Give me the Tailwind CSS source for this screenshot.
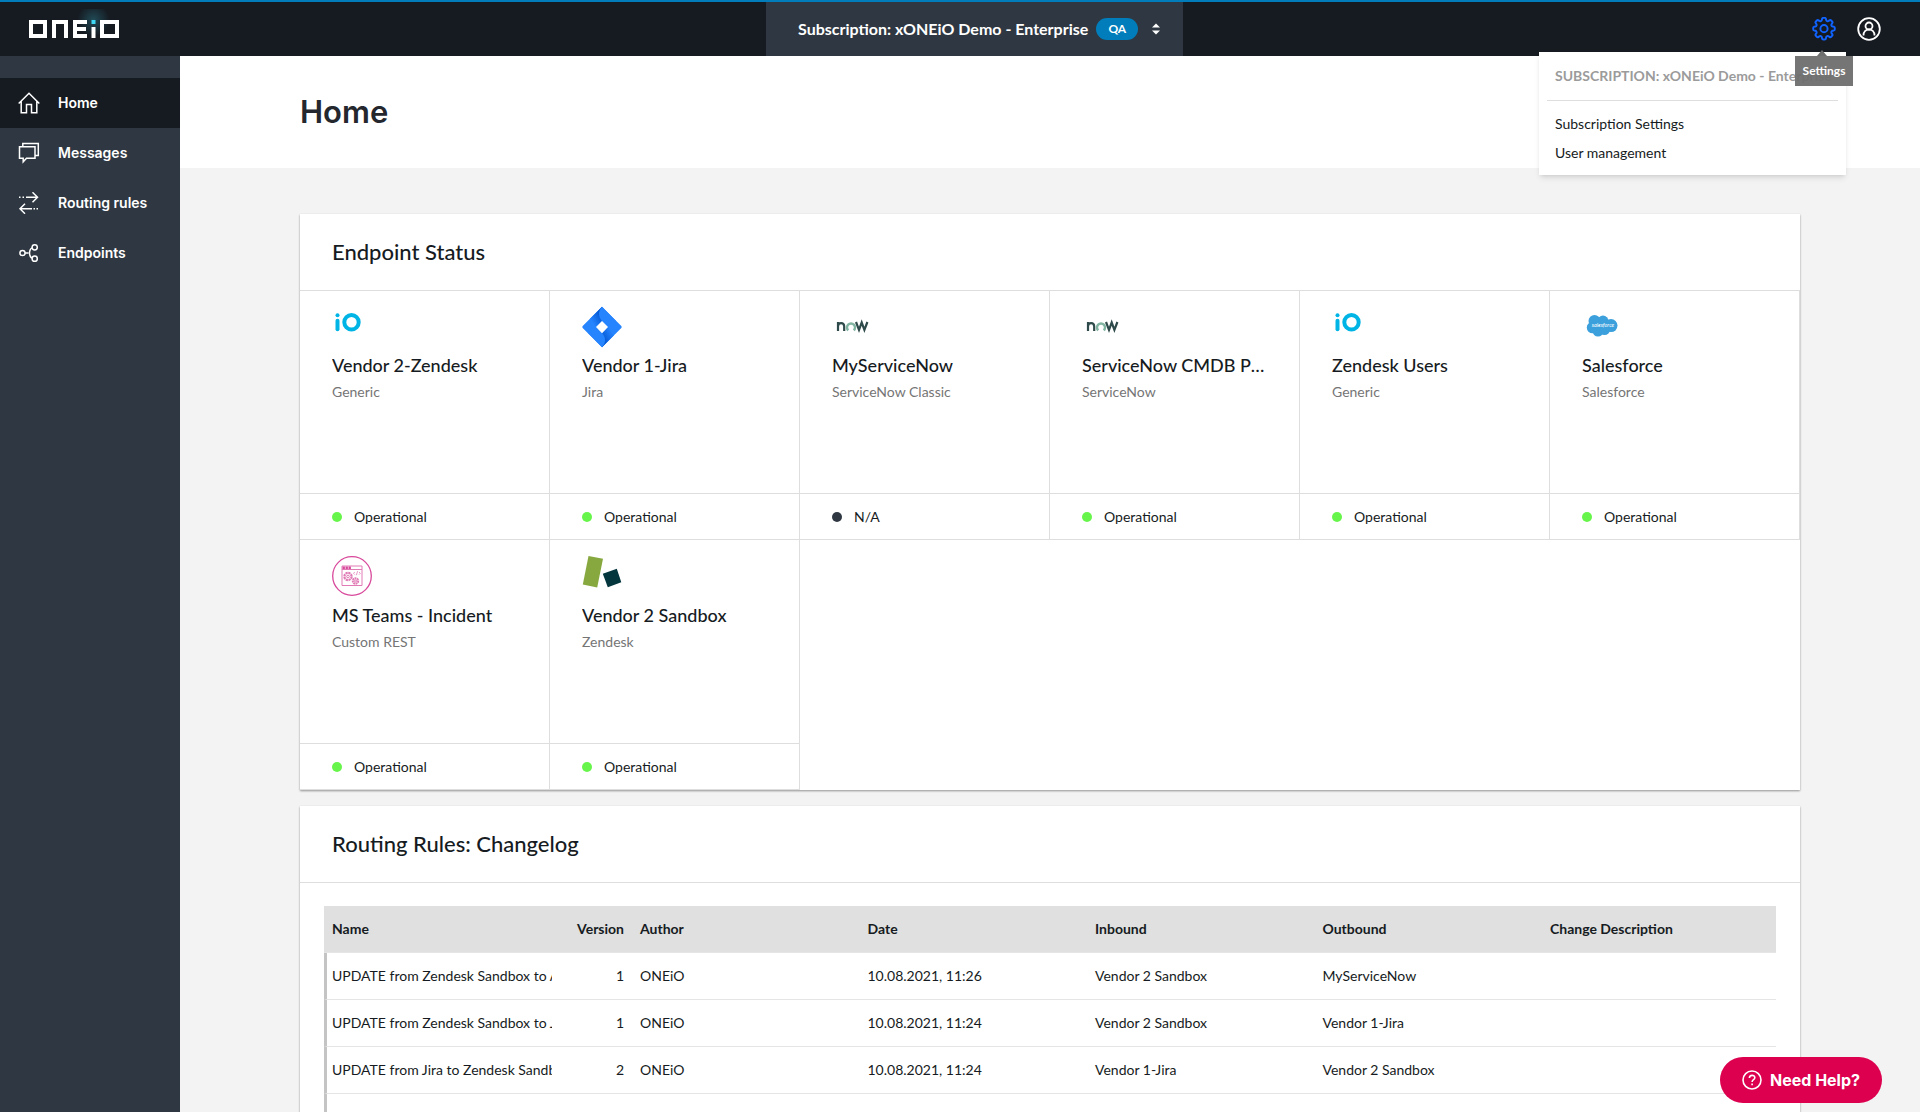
<!DOCTYPE html>
<html lang="en">
<head>
<meta charset="utf-8">
<meta name="viewport" content="width=device-width, initial-scale=1">
<title>ONEiO - Home</title>
<script src="https://cdn.jsdelivr.net/npm/@tailwindcss/browser@4"></script>
</head>
<body class="h-screen overflow-hidden flex flex-col bg-[#f3f3f3] font-['Lato',sans-serif] text-sm text-[#161b22]">

<svg class="hidden" aria-hidden="true">
  <symbol id="io" viewBox="0 0 40 40">
    <circle cx="5.500" cy="9.300" r="2" fill="#00b5e5"/>
    <path d="M5.500 14.800v8.500" stroke="#00b5e5" stroke-width="4" stroke-linecap="round"/>
    <circle cx="19.500" cy="16.200" r="7.200" fill="none" stroke="#00b5e5" stroke-width="4"/>
  </symbol>
  <symbol id="now" viewBox="0 0 40 40">
    <path d="M6 25v-9M6 20.500c0-4.600 6.200-4.600 6.200 0V25" fill="none" stroke="#2f4a4a" stroke-width="2.200"/>
    <path d="M16.200 24.300a4 4 0 1 1 5.600 0" fill="none" stroke="#81b5a1" stroke-width="2.400"/>
    <path d="M24 16l3 7.800 2.700-7.300 2.700 7.300 3-7.800" fill="none" stroke="#2f4a4a" stroke-width="2.200"/>
  </symbol>
</svg>

<header class="relative z-10 flex h-14 shrink-0 items-stretch border-t-2 border-[#007dba] bg-[#161b22] pl-7 pr-[39px] text-white">
  <a href="#" aria-label="ONEiO" class="flex flex-1 items-center">
    <svg class="h-10 w-[100px]" viewBox="0 0 100 40">
      <defs><radialGradient id="glow"><stop offset="0" stop-color="#3fd9f5" stop-opacity=".25"/><stop offset="1" stop-color="#3fd9f5" stop-opacity="0"/></radialGradient></defs>
      <circle cx="65.500" cy="11" r="16" fill="url(#glow)"/>
      <g fill="none" stroke="#fff" stroke-width="4">
        <path d="M3 13h14v14H3z"/>
        <path d="M26 29V13h12v16"/>
        <path d="M59 13H47v14h12M47 20h11"/>
        <path d="M65.500 18v11"/>
        <path d="M74 13h15v14H74z"/>
      </g>
      <path d="M63.500 11h4v4h-4z" fill="#3fd9f5"/>
    </svg>
  </a>
  <button type="button" class="ml-10 flex w-[417px] items-center bg-[#2f3842] pl-8 text-base font-bold">
    Subscription: xONEiO Demo - Enterprise
    <span class="ml-2 flex h-[22px] w-[42px] items-center justify-center rounded-full bg-[#007dba] text-xs">QA</span>
    <svg class="ml-3 h-3 w-3" viewBox="0 0 12 12" fill="#fff"><path d="M2 4.500L6 .5l4 4zM2 7.500h8l-4 4z"/></svg>
  </button>
  <div class="flex flex-1 items-center justify-end gap-[21px]">
    <div class="relative flex">
      <button type="button" aria-label="Settings" class="text-[#1063fe]">
        <svg class="size-6" viewBox="2 2 20 20" fill="none" stroke="currentColor" stroke-width="1.600" stroke-linejoin="round"><path d="M10.343 3.940c.09-.542.560-.940 1.110-.940h1.093c.550 0 1.020.398 1.110.940l.149.894c.070.424.384.764.780.930.398.164.855.142 1.205-.108l.737-.527a1.125 1.125 0 0 1 1.450.120l.773.774c.390.389.440 1.002.120 1.450l-.527.737c-.250.350-.272.806-.107 1.204.165.397.505.710.930.780l.893.150c.543.090.940.559.940 1.109v1.094c0 .550-.397 1.020-.940 1.110l-.894.149c-.424.070-.764.383-.929.780-.165.398-.143.854.107 1.204l.527.738c.320.447.269 1.060-.120 1.450l-.774.773a1.125 1.125 0 0 1-1.449.120l-.738-.527c-.350-.250-.806-.272-1.203-.107-.398.165-.710.505-.781.929l-.149.894c-.090.542-.560.940-1.110.940h-1.094c-.550 0-1.019-.398-1.110-.940l-.148-.894c-.071-.424-.384-.764-.781-.930-.398-.164-.854-.142-1.204.108l-.738.527c-.447.320-1.060.269-1.450-.120l-.773-.774a1.125 1.125 0 0 1-.120-1.450l.527-.737c.250-.350.272-.806.108-1.204-.165-.397-.506-.710-.930-.780l-.894-.150c-.542-.090-.940-.560-.940-1.109v-1.094c0-.550.398-1.020.940-1.110l.894-.149c.424-.070.765-.383.930-.780.165-.398.143-.854-.108-1.204l-.526-.738a1.125 1.125 0 0 1 .120-1.450l.773-.773a1.125 1.125 0 0 1 1.450-.120l.737.527c.350.250.807.272 1.204.107.397-.165.710-.505.780-.929l.150-.894Z" transform="translate(0 -.3)"/><circle cx="12" cy="11.700" r="3"/></svg>
      </button>
      <div class="absolute -right-2.5 top-[35px] w-[307px] bg-white px-2 pb-2 text-[#161b22] shadow-md">
        <div class="flex h-[49px] items-center overflow-hidden whitespace-nowrap border-b border-[#dedede] px-2 font-bold text-[#9b9b9b]">SUBSCRIPTION: xONEiO Demo - Enterprise</div>
        <nav class="flex flex-col pt-2">
          <a href="#" class="px-2 py-1 leading-[21px]">Subscription Settings</a>
          <a href="#" class="px-2 py-1 leading-[21px]">User management</a>
        </nav>
      </div>
      <div role="tooltip" class="absolute -right-[17px] top-[39px] flex h-[30px] w-[58px] items-center justify-center bg-[#6e6e6e]/95 text-xs font-bold">
        <span class="absolute -top-1.5 left-[22px] border-x-[5px] border-b-[6px] border-x-transparent border-b-[#6e6e6e]"></span>
        Settings
      </div>
    </div>
    <button type="button" aria-label="Account">
      <svg class="size-6" viewBox="0 0 24 24" fill="none" stroke="#fff" stroke-width="1.800"><circle cx="12" cy="12" r="10.800"/><circle cx="12" cy="9" r="3.500"/><path d="M6.500 18.500c0-8 11-8 11 0"/></svg>
    </button>
  </div>
</header>

<div class="flex min-h-0 flex-1">
  <nav class="w-[180px] shrink-0 bg-[#2f3842] pt-[22px] font-['Inter',sans-serif] font-semibold text-white">
    <a href="#" class="flex h-[50px] items-center gap-[18px] bg-[#161b22] pl-[18px]">
      <svg class="size-[22px]" viewBox="0 0 22 22" fill="none" stroke="#fff" stroke-width="1.500"><path d="M.7 11.500L11 1.200l10.300 10.300M3.200 9.500v11.300h5.300v-8.300h5v8.300h5.300V9.500"/></svg>
      Home
    </a>
    <a href="#" class="flex h-[50px] items-center gap-[18px] pl-[18px]">
      <svg class="size-[22px]" viewBox="0 0 22 22" fill="none" stroke="#fff" stroke-width="1.500"><path d="M4.800 4.500V1.500h15.500v12h-3.300"/><path d="M1.500 4.800h15.500v11.500H8.500L5.200 19.800v-3.500H1.500z"/></svg>
      Messages
    </a>
    <a href="#" class="flex h-[50px] items-center gap-[18px] pl-[18px]">
      <svg class="size-[22px]" viewBox="0 0 22 22" fill="none" stroke="#fff" stroke-width="1.500"><path d="M8 5.300h12M14.500.3l5 5-5 5M14 16.700H2M7 11.700l-5 5 5 5M1 5.300h1.500M4.500 5.300H6M15.500 16.700H17M18.500 16.700H20"/></svg>
      Routing rules
    </a>
    <a href="#" class="flex h-[50px] items-center gap-[18px] pl-[18px]">
      <svg class="size-[22px]" viewBox="0 0 22 22" fill="none" stroke="#fff" stroke-width="1.500"><circle cx="4.500" cy="11" r="2.600"/><circle cx="16.700" cy="5.300" r="2.600"/><circle cx="16.700" cy="16.700" r="2.600"/><path d="M7.100 11h3.400M14.100 5.900c-2 .7-2.400 2-2.600 5.100.2 3.100.6 4.400 2.600 5.100"/></svg>
      Endpoints
    </a>
  </nav>

  <main class="min-w-0 flex-1 overflow-hidden">
    <div class="h-28 bg-white">
      <div class="mx-auto flex h-full max-w-[1500px] items-center">
        <h1 class="font-['Inter',sans-serif] text-[31px] font-semibold text-[#24272d]">Home</h1>
      </div>
    </div>

    <div class="mx-auto flex max-w-[1500px] flex-col gap-4 pt-[46px]">
      <section class="bg-white shadow-[0_1px_2px_rgba(0,0,0,0.4)]">
        <h2 class="flex h-[77px] items-center border-b border-[#dedede] px-8 text-[22px] font-medium">Endpoint Status</h2>
        <ul id="endpoints" class="-mt-px grid grid-cols-6"></ul>
      </section>

      <section class="bg-white shadow-[0_1px_2px_rgba(0,0,0,0.4)]">
        <h2 class="flex h-[77px] items-center border-b border-[#dedede] px-8 text-[22px] font-medium">Routing Rules: Changelog</h2>
        <div class="px-6 pt-[23px]">
          <table class="w-full table-fixed border-separate border-spacing-0 text-left">
            <colgroup><col class="w-[236px]"><col class="w-[72px]"><col><col><col><col><col class="w-[234px]"></colgroup>
            <thead class="bg-[#e0e0e0]">
              <tr class="h-[47px]">
                <th class="border-b border-[#e5e5e5] px-2 font-bold">Name</th>
                <th class="border-b border-[#e5e5e5] px-2 text-right font-bold">Version</th>
                <th class="border-b border-[#e5e5e5] px-2 font-bold">Author</th>
                <th class="border-b border-[#e5e5e5] px-2 font-bold">Date</th>
                <th class="border-b border-[#e5e5e5] px-2 font-bold">Inbound</th>
                <th class="border-b border-[#e5e5e5] px-2 font-bold">Outbound</th>
                <th class="border-b border-[#e5e5e5] px-2 font-bold">Change Description</th>
              </tr>
            </thead>
            <tbody id="log"></tbody>
          </table>
        </div>
      </section>
    </div>
  </main>
</div>

<button type="button" class="fixed bottom-[9px] right-[38px] flex h-[46px] w-[162px] items-center justify-center gap-2 rounded-full bg-[#dc004e] font-['Inter',sans-serif] text-base font-bold text-white">
  <svg class="size-5" viewBox="0 0 20 20" fill="none" stroke="#fff" stroke-width="1.600"><circle cx="10" cy="10" r="9"/><path d="M7.400 8c0-3.600 5.400-3.400 5.400-.3 0 2-2.700 2-2.700 4.300M10.100 13.500v1.800"/></svg>
  Need Help?
</button>

<script>
const logos = {
  io: '<svg class="size-10" viewBox="0 0 40 40"><use href="#io"/></svg>',
  now: '<svg class="size-10" viewBox="0 0 40 40"><use href="#now"/></svg>',
  jira: '<svg class="size-10 overflow-visible" viewBox="0 0 40 40"><defs><linearGradient id="j1" x1="1" y1="0" x2="0.2" y2="0.8"><stop offset=".2" stop-color="#0052cc"/><stop offset="1" stop-color="#2684ff"/></linearGradient><linearGradient id="j2" x1="0" y1="1" x2="0.8" y2="0.2"><stop offset=".2" stop-color="#0052cc"/><stop offset="1" stop-color="#2684ff"/></linearGradient></defs><g transform="translate(0 .8)"><path d="M20 0l19.300 19.300q.9.900 0 1.800L20 40.500.7 21.100q-.9-.9 0-1.800z" fill="#2684ff"/><path d="M20 0v14.200l-5.800 6L8 12z" fill="url(#j1)"/><path d="M20 0c-4 4-4 10 0 14.200l6 6 8-6z" fill="#2684ff"/><path d="M20 40.500V26.300l5.800-6 6.200 8.200z" fill="url(#j2)"/><path d="M20 40.500c4-4 4-10 0-14.200l-6-6-8 6z" fill="#2684ff"/><path d="M20 14.200l6 6.100-6 6.100-6-6.100z" fill="#fff"/></g></svg>',
  sf: '<svg class="size-10" viewBox="0 0 40 40"><g transform="translate(0 .6)"><g fill="#3ba0dc"><circle cx="12.500" cy="14.500" r="6"/><circle cx="21" cy="14.500" r="5.500"/><circle cx="29" cy="19" r="6.500"/><circle cx="10.500" cy="21" r="5.700"/><circle cx="16" cy="24.500" r="5.500"/><circle cx="22.500" cy="23" r="5.500"/></g><text x="21" y="20.500" text-anchor="middle" font-size="5.500" font-style="italic" fill="#fff">salesforce</text></g></svg>',
  rest: '<svg class="size-10" viewBox="0 0 40 40" fill="none" stroke="#d8499b"><circle cx="20" cy="20" r="19.300" stroke-width="1.300"/><path d="M10 10h20v19.500H10zM10 13.500h20" stroke="#e07bb5"/><path d="M10.500 11.800h9" stroke="#d8499b" stroke-width="2.400" stroke-dasharray="2.400 .6"/><g stroke="#e07bb5"><circle cx="16" cy="20.500" r="3.600" stroke-width="2.200" stroke-dasharray="2.200 .6"/><circle cx="16" cy="20.500" r="1.300"/><circle cx="23.500" cy="25" r="2.700" stroke-width="2" stroke-dasharray="1.800 .5"/><circle cx="23.500" cy="25" r="1"/><path d="M22.800 16l-1.300 1.300 1.300 1.300M27 16l1.300 1.300-1.300 1.300M25.600 15.200l-1.200 4" stroke-width=".8"/></g></svg>',
  zd: '<svg class="size-10" viewBox="0 0 40 40"><path d="M6.500 0L21 2.800 15.200 31.500.8 28.500z" fill="#86a83e"/><path d="M20.800 17.800l14-5 4.500 13.400-13.500 5z" fill="#03363d"/></svg>'
};
const endpoints = [
  ['io', 'Vendor 2-Zendesk', 'Generic', 'Operational'],
  ['jira', 'Vendor 1-Jira', 'Jira', 'Operational'],
  ['now', 'MyServiceNow', 'ServiceNow Classic', 'N/A'],
  ['now', 'ServiceNow CMDB Production', 'ServiceNow', 'Operational'],
  ['io', 'Zendesk Users', 'Generic', 'Operational'],
  ['sf', 'Salesforce', 'Salesforce', 'Operational'],
  ['rest', 'MS Teams - Incident', 'Custom REST', 'Operational'],
  ['zd', 'Vendor 2 Sandbox', 'Zendesk', 'Operational']
];
document.getElementById('endpoints').innerHTML = endpoints.map(([logo, name, type, status]) => `
  <li class="flex h-[250px] min-w-0 flex-col border-b border-r border-[#dedede]">
    <div class="flex-1 px-8 pt-4">
      ${logos[logo]}
      <h3 class="mt-[5px] truncate text-lg font-medium leading-7">${name}</h3>
      <p class="mt-px leading-6 text-[#757575]">${type}</p>
    </div>
    <div class="flex h-[46px] items-center gap-3 border-t border-[#dedede] px-8">
      <span class="size-2.5 rounded-full ${status === 'N/A' ? 'bg-[#2f3842]' : 'bg-[#67f54b]'}"></span>${status}
    </div>
  </li>`).join('');

const log = [
  ['UPDATE from Zendesk Sandbox to API ServiceNow', 1, 'ONEiO', '10.08.2021, 11:26', 'Vendor 2 Sandbox', 'MyServiceNow'],
  ['UPDATE from Zendesk Sandbox to Jira', 1, 'ONEiO', '10.08.2021, 11:24', 'Vendor 2 Sandbox', 'Vendor 1-Jira'],
  ['UPDATE from Jira to Zendesk Sandbox', 2, 'ONEiO', '10.08.2021, 11:24', 'Vendor 1-Jira', 'Vendor 2 Sandbox'],
  ['CREATE from Jira to Zendesk Sandbox', 1, 'ONEiO', '10.08.2021, 11:24', 'Vendor 2 Sandbox', 'Vendor 2 Sandbox']
];
document.getElementById('log').innerHTML = log.map(([name, version, ...rest]) => `
  <tr class="h-[47px]">
    <td class="border-b border-l-[3px] border-b-[#e5e5e5] border-l-[#c4c4c4] pl-[5px] pr-2"><div class="overflow-hidden whitespace-nowrap">${name}</div></td>
    <td class="border-b border-[#e5e5e5] px-2 text-right">${version}</td>
    ${[...rest, ''].map(v => `<td class="border-b border-[#e5e5e5] px-2">${v}</td>`).join('')}
  </tr>`).join('');
</script>
</body>
</html>
